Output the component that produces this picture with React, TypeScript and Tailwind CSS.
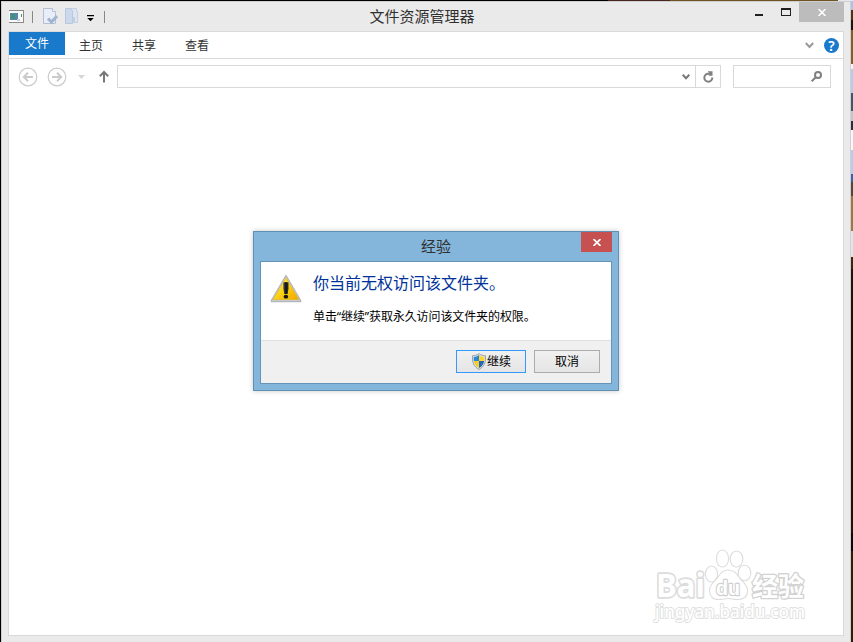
import React from 'react'

const tabs = ['主页', '共享', '查看']

// Slices of the desktop that show past the window's right edge
const desktopStrip = [
  { h: 'h-[9px]', c: 'bg-[#a9c4ea]' },
  { h: 'h-[10px]', c: 'bg-[#4a3413]' },
  { h: 'h-[10px]', c: 'bg-[#1b140c]' },
  { h: 'h-[34px]', c: 'bg-[#7c6028]' },
  { h: 'h-[5px]', c: 'bg-[#f4f6fa]' },
  { h: 'h-[24px]', c: 'bg-[#b4cbec]' },
  { h: 'h-[18px]', c: 'bg-[#44546b]' },
  { h: 'h-[10px]', c: 'bg-[#c3c7cd]' },
  { h: 'h-[9px]', c: 'bg-[#26303c]' },
  { h: 'h-[20px]', c: 'bg-[#f8f9fc]' },
  { h: 'h-[24px]', c: 'bg-[#b5ccef]' },
  { h: 'h-[8px]', c: 'bg-[#3a64a8]' },
  { h: 'h-[14px]', c: 'bg-[#51483b]' },
  { h: 'h-[35px]', c: 'bg-[#997841]' },
  { h: 'h-[26px]', c: 'bg-[#dfe6e8]' },
  { h: 'h-[12px]', c: 'bg-[#3a260f]' },
  { h: 'h-[24px]', c: 'bg-[#1c130a]' },
  { h: 'h-[240px]', c: 'bg-[#1e1304]' },
  { h: 'h-[18px]', c: 'bg-[#0c0805]' },
  { h: 'flex-1', c: 'bg-[#2f1d0b]' },
]

function AppIcon() {
  return (
    <svg width="15" height="13" viewBox="0 0 15 13" shapeRendering="crispEdges">
      <rect width="15" height="13" fill="#8a8a8a" />
      <rect x="0" y="1" width="14" height="11" fill="#fafafa" />
      <rect x="1" y="3" width="8" height="7" fill="#5b87a6" />
      <rect x="2" y="4" width="4" height="5" fill="#3f927e" />
      <rect x="8" y="9" width="3" height="2" fill="#c9ced4" />
      <rect x="12" y="4" width="1" height="3" fill="#419c76" />
    </svg>
  )
}

function PropertiesIcon() {
  return (
    <svg width="16" height="17" viewBox="0 0 16 17">
      <path d="M.5.5h9l3 3v12H.5z" fill="#e8edf7" stroke="#b3c0d8" />
      <path d="M9.500.5v3h3" fill="#f9fbff" stroke="#b3c0d8" />
      <path d="M5 10.500l3.500 3.500L14 8" fill="none" stroke="#a2b3ce" strokeWidth="3" />
    </svg>
  )
}

function FolderIcon() {
  return (
    <svg width="14" height="17" viewBox="0 0 14 17">
      <path d="M3.500.5h8v3h1v11h-9z" fill="#dde5f2" stroke="#c3cfe2" />
      <path d="M.5.5h5l2 2v13h-7z" fill="#ccd8eb" stroke="#b9c8df" />
      <path d="M8 9h2v5.500H8z" fill="#c3d0e4" />
    </svg>
  )
}

function NavButton({ forward }: { forward?: boolean }) {
  return (
    <svg width="20" height="20" viewBox="0 0 20 20" fill="none" stroke="#cbcbcb">
      <circle cx="10" cy="10" r="8.800" strokeWidth="1.200" />
      <g transform={forward ? 'translate(20 0) scale(-1 1)' : undefined} strokeWidth="2">
        <path d="M6 10h9M10 5.800L5.800 10l4.200 4.200" />
      </g>
    </svg>
  )
}

function WarningIcon() {
  return (
    <svg width="32" height="29" viewBox="0 0 32 29">
      <defs>
        <linearGradient id="warn" x1="0" y1="0" x2="1" y2="1">
          <stop offset="0" stopColor="#fff06a" />
          <stop offset=".5" stopColor="#fcd213" />
          <stop offset="1" stopColor="#f0a400" />
        </linearGradient>
        <linearGradient id="mark" x1="0" y1="0" x2="1" y2="0">
          <stop offset="0" stopColor="#555" />
          <stop offset=".5" stopColor="#111" />
          <stop offset="1" stopColor="#333" />
        </linearGradient>
      </defs>
      <path d="M16 1.500L30.700 26.500v1H1.300v-1z" fill="#d0d2d3" stroke="#b4b7b9" strokeWidth="1.300" strokeLinejoin="round" />
      <path d="M16 3.800L28.800 25.500H3.200z" fill="url(#warn)" stroke="#e8b410" strokeWidth=".6" strokeLinejoin="round" />
      <path d="M13.300 8.600q2.700-1 5.200 0v6l-.9 5.400h-3.300l-1-5.400z" fill="url(#mark)" />
      <ellipse cx="15.900" cy="22.700" rx="2.300" ry="1.900" fill="#151515" />
    </svg>
  )
}

function ShieldIcon() {
  return (
    <svg width="16" height="17" viewBox="0 0 16 17">
      <defs>
        <clipPath id="shield">
          <path d="M8 2c1.500 1.300 3.400 1.800 5.200 1.900C13.800 9 12 12.800 8 15 4 12.800 2.200 9 2.800 3.900 4.600 3.800 6.500 3.300 8 2z" />
        </clipPath>
      </defs>
      <path d="M8 .6c2 1.500 4.300 2.100 6.400 2.100C15.300 9 13 14 8 16.400 3 14 .7 9 1.600 2.700 3.700 2.700 6 2.100 8 .6z" fill="#dfe4e8" stroke="#85909a" strokeWidth=".8" />
      <g clipPath="url(#shield)">
        <rect width="8" height="8" fill="#2a86d8" />
        <rect x="8" width="8" height="8" fill="#fbd530" />
        <rect y="8" width="8" height="9" fill="#f9cd2c" />
        <rect x="8" y="8" width="8" height="9" fill="#2467b5" />
      </g>
    </svg>
  )
}

function Watermark() {
  return (
    <svg className="absolute left-[650px] top-[545px]" width="165" height="82" viewBox="0 0 165 82">
      <g fill="#fff" stroke="#dcdcdc" strokeWidth="3.400" strokeLinejoin="round" paintOrder="stroke">
        <text x="6" y="52" fontSize="33" fontWeight="700" textLength="49" lengthAdjust="spacingAndGlyphs" fontFamily="'Open Sans', sans-serif">Bai</text>
        <g strokeWidth="2.200">
          <ellipse cx="61.500" cy="29" rx="5.500" ry="7.400" />
          <ellipse cx="72.500" cy="13.500" rx="5.500" ry="8" />
          <ellipse cx="86.500" cy="14" rx="5.800" ry="7.400" />
          <ellipse cx="94.500" cy="28" rx="5.800" ry="7.200" />
          <path d="M78 25.500c5 0 8 3 10 6 3 5 9 8 9 14 0 6-4 8.500-10 8.500-3 0-6-1-9-1s-6 1-9 1c-6 0-9-3.500-9-8.500 0-6 6-9 9-14 2-3 5-6 9-6z" />
        </g>
        <text x="66" y="50" fontSize="21" fontWeight="700" textLength="24" lengthAdjust="spacingAndGlyphs" fontFamily="'Liberation Sans', Arial, sans-serif" stroke="#cfcfcf" strokeWidth="2.400">du</text>
        <text x="102" y="51" fontSize="26" fontWeight="700" textLength="52" fontFamily="'Noto Sans CJK SC', sans-serif" stroke="#d2d2d2" strokeWidth="2.600">经验</text>
        <text x="5" y="73" fontSize="17.500" textLength="150" lengthAdjust="spacingAndGlyphs" fontFamily="'Noto Sans', sans-serif" fontWeight="500" stroke="#e0e0e0" strokeWidth="1.900">jingyan.baidu.com</text>
      </g>
    </svg>
  )
}

function AccessDialog() {
  return (
    <div className="absolute left-[253px] top-[231px] flex h-[160px] w-[366px] flex-col border border-[#5f8fb1] bg-[#84b6dc] px-[6px] pb-[6px] shadow-[0_0_5px_rgba(0,0,0,0.22)]">
      <div className="flex h-[29px] shrink-0 items-start">
        <div className="w-[31px]" />
        <h2 className="flex-1 pt-[3px] text-center text-[15px] leading-[23px] text-[#303030]">经验</h2>
        <button className="flex h-5 w-[31px] items-center justify-center bg-[#c75050]">
          <svg width="8" height="7" viewBox="0 0 8 7" stroke="#fff" strokeWidth="1.700">
            <path d="M.5 0l7 7M7.500 0l-7 7" />
          </svg>
        </button>
      </div>
      <div className="flex flex-1 flex-col border border-[#6694b6] bg-white">
        <div className="flex h-[78px] pl-[9px]">
          <div className="pt-[12px]">
            <WarningIcon />
          </div>
          <div className="pl-[11px] pt-[9px]">
            <p className="whitespace-nowrap text-[16px] leading-6 text-[#003399]">你当前无权访问该文件夹。</p>
            <p className="mt-[13px] whitespace-nowrap text-[12px] leading-[18px] tracking-[-0.1px] text-black">单击“继续”获取永久访问该文件夹的权限。</p>
          </div>
        </div>
        <div className="flex flex-1 justify-end gap-2 border-t border-[#dfdfdf] bg-[#f0f0f0] pr-[11px] pt-[9px]">
          <button className="flex h-[23px] w-[70px] items-center justify-center border border-[#3399ff] bg-linear-to-b from-[#f0f0f0] to-[#e5e5e5] text-[12px] leading-[18px] text-black">
            <ShieldIcon />
            <span>继续</span>
          </button>
          <button className="h-[23px] w-[66px] border border-[#acacac] bg-linear-to-b from-[#f0f0f0] to-[#e5e5e5] text-[12px] leading-[18px] text-black">
            取消
          </button>
        </div>
      </div>
    </div>
  )
}

export default function App() {
  return (
    <div className="relative flex h-[642px] w-[853px] flex-col overflow-hidden bg-black font-['Noto_Sans','Noto_Sans_CJK_SC',sans-serif]">
      {/* Desktop behind the top edge */}
      <div className="flex h-px shrink-0">
        <div className="w-[608px] bg-black" />
        <div className="w-[62px] bg-[#4a2420]" />
        <div className="w-[168px] bg-[#6f5323]" />
        <div className="flex-1 bg-[#e5e9ef]" />
      </div>

      <div className="flex min-h-0 flex-1 pl-px">
        <div className="flex w-[850px] flex-col border-x border-t border-[#cfcfcf] bg-[#eaeaea] pb-[6px]">
          {/* Title bar */}
          <div className="flex h-[29px] shrink-0 items-start">
            <div className="flex h-[29px] w-[110px] items-center pl-[7px]">
              <AppIcon />
              <div className="ml-2 h-3 w-px bg-[#888]" />
              <div className="ml-[10px]"><PropertiesIcon /></div>
              <div className="ml-[6px]"><FolderIcon /></div>
              <svg className="ml-[8px] mt-[3px]" width="7" height="7" viewBox="0 0 7 7">
                <path d="M0 0h7v1.200H0zM.3 3h6.400L3.500 6.200z" fill="#000" />
              </svg>
              <div className="ml-[10px] h-3 w-px bg-[#888]" />
            </div>
            <h1 className="flex-1 pr-[19px] pt-[3px] text-center text-[15px] leading-[23px] text-[#303030]">文件资源管理器</h1>
            <div className="flex w-[99px] items-start pl-1">
              <div className="mt-[12px] h-[2px] w-[8px] bg-[#202020]" />
              <div className="ml-[18px] mt-[6px] h-[8px] w-[10px] border border-t-2 border-[#202020]" />
              <button className="ml-[8px] flex h-5 w-[45px] shrink-0 items-center justify-center bg-[#bcbcbc]">
                <svg width="8" height="7" viewBox="0 0 8 7" stroke="#fff" strokeWidth="1.500">
                  <path d="M.5 0l7 7M7.500 0l-7 7" />
                </svg>
              </button>
            </div>
          </div>

          <div className="mx-[6px] flex flex-1 flex-col border border-[#d9d9d9] bg-white">
            {/* Ribbon tabs */}
            <div className="flex h-[27px] shrink-0 items-start border-b border-[#dadada] text-[12px] text-[#333]">
              <button className="h-[23px] w-[56px] bg-[#1979ca] leading-[23px] text-white">文件</button>
              {tabs.map(tab => (
                <button key={tab} className="w-[53px] pr-px pt-[5px] leading-[18px]">{tab}</button>
              ))}
              <div className="ml-auto flex h-[26px] items-center pr-1">
                <svg width="9" height="7" viewBox="0 0 9 7" fill="none" stroke="#999" strokeWidth="2">
                  <path d="M.8 1l3.700 4L8.200 1" />
                </svg>
                <div className="ml-[10px] flex h-[15px] w-[15px] items-center justify-center rounded-full bg-[#1979ca] text-[14px] font-semibold leading-[15px] text-white">?</div>
              </div>
            </div>

            {/* Address bar */}
            <div className="flex h-[35px] items-center pl-[9px] pr-3">
              <NavButton />
              <div className="ml-[9px]"><NavButton forward /></div>
              <svg className="ml-[11px]" width="7" height="4" viewBox="0 0 7 4">
                <path d="M0 0h7L3.500 4z" fill="#d6d6d6" />
              </svg>
              <svg className="ml-[14px]" width="10" height="13" viewBox="0 0 10 13" fill="none" stroke="#777" strokeWidth="2">
                <path d="M5 12.500V2M.8 6.200L5 2l4.200 4.200" />
              </svg>
              <div className="ml-2 flex h-[23px] flex-1 items-center border border-[#d9d9d9]">
                <svg className="ml-auto mr-[5px]" width="8" height="6" viewBox="0 0 8 6" fill="none" stroke="#777" strokeWidth="2">
                  <path d="M.7.800L4 4.300 7.300.800" />
                </svg>
                <div className="flex h-[21px] w-[25px] items-center justify-center border-l border-[#d9d9d9]">
                  <svg width="11" height="12" viewBox="0 0 11 12" fill="none" stroke="#808080" strokeWidth="2">
                    <path d="M9.300 6.500A4 4 0 1 1 5.300 2.700h1.500" />
                    <path d="M5 .3L9.500.2v4.600H5.800V3.600L7 2.800 5 1z" fill="#808080" stroke="none" />
                  </svg>
                </div>
              </div>
              <div className="ml-3 flex h-[23px] w-[98px] items-center justify-end border border-[#d9d9d9] pr-2">
                <svg width="11" height="11" viewBox="0 0 11 11" fill="none" stroke="#808080" strokeWidth="2">
                  <circle cx="7" cy="4" r="3" />
                  <path d="M4.800 6.200L.7 10.300" />
                </svg>
              </div>
            </div>
          </div>
        </div>

        {/* Desktop behind the right edge */}
        <div className="flex w-[2px] flex-col">
          {desktopStrip.map((s, i) => (
            <div key={i} className={`${s.h} ${s.c}`} />
          ))}
        </div>
      </div>

      <Watermark />
      <AccessDialog />
    </div>
  )
}
